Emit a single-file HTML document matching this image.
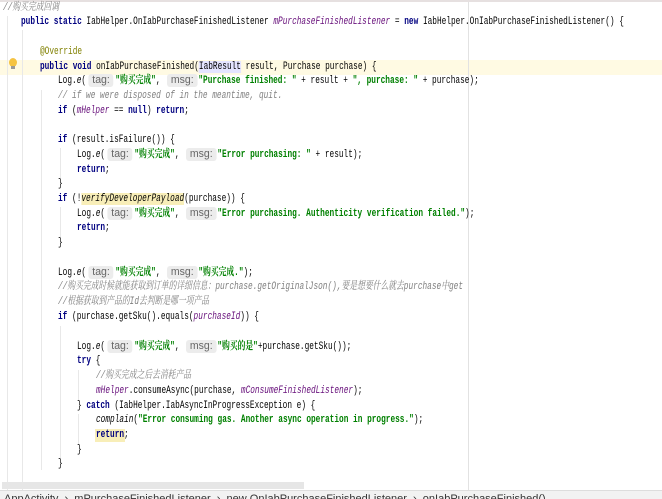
<!DOCTYPE html>
<html><head><meta charset="utf-8"><style>
html,body{margin:0;padding:0;width:662px;height:499px;overflow:hidden;background:#fff;position:relative}
.ln{position:absolute;left:0;height:15px;line-height:15px;white-space:pre;font-family:"Liberation Mono","Noto Serif CJK SC",monospace;font-size:11px;color:#000;transform:scaleX(0.708);transform-origin:0 0}
.k{color:#000080;font-weight:bold}
.s{color:#008000;font-weight:bold}
.c{color:#808080;font-style:italic}
.f{color:#660e7a;font-style:italic}
.a{color:#808000}
.i{font-style:italic}
.h{display:inline-block;background:#ececec;color:#666;font-family:"Liberation Sans",sans-serif;font-size:11px;line-height:13px;padding:0 4px;border-radius:3px;margin:0 3px;transform:scaleX(1.35);transform-origin:0 50%;margin-right:12px}
.g{position:absolute;width:1px;background:#e8e8e8}
</style></head><body>
<div style="position:absolute;left:0;top:0;width:662px;height:2px;background:#e6e0e0"></div>
<div style="position:absolute;left:0;top:60px;width:662px;height:15px;background:#fffae3"></div>
<div style="position:absolute;left:468px;top:2px;width:1px;height:488px;background:#e2e2e2"></div>
<div class="g" style="left:7px;top:16px;height:474px"></div>
<div class="g" style="left:22px;top:30px;height:460px"></div>
<div class="g" style="left:41px;top:90px;height:380px"></div>
<div class="g" style="left:60px;top:148px;height:30px"></div>
<div class="g" style="left:60px;top:207px;height:30px"></div>
<div class="g" style="left:60px;top:326px;height:132px"></div>
<div class="g" style="left:78px;top:370px;height:30px"></div>
<div class="g" style="left:78px;top:414px;height:30px"></div>
<div style="position:absolute;left:9px;top:58px;width:8px;height:9px;border-radius:50%;background:#f5c342"></div>
<div style="position:absolute;left:11px;top:66px;width:4px;height:3px;background:#999"></div>
<div style="position:absolute;left:95px;top:429px;width:30px;height:13px;background:#f8eeb8"></div>
<div style="position:absolute;left:2px;top:482px;width:302px;height:7px;background:#e6e6e6"></div>
<div style="position:absolute;left:0;top:490px;width:662px;height:9px;background:#f2f2f2;border-top:1px solid #ddd;overflow:hidden">
<div style="position:absolute;left:4px;top:2px;font-family:'Liberation Sans',sans-serif;font-size:11px;color:#333;white-space:pre">AppActivity  ›  mPurchaseFinishedListener  ›  new OnIabPurchaseFinishedListener  ›  onIabPurchaseFinished()</div></div>

<div class="ln" style="top:1px;left:3px"><span class="c">//购买完成回调</span></div>
<div class="ln" style="top:15px;left:21px"><span class="k">public static </span>IabHelper.OnIabPurchaseFinishedListener <span class="f">mPurchaseFinishedListener</span> = <span class="k">new </span>IabHelper.OnIabPurchaseFinishedListener() {</div>
<div class="ln" style="top:45px;left:40px"><span class="a">@Override</span></div>
<div class="ln" style="top:60px;left:40px"><span class="k">public void </span>onIabPurchaseFinished(<span style="background:#e4e4ff">IabResult</span> result, Purchase purchase) {</div>
<div class="ln" style="top:74px;left:58px">Log.<span class="i">e</span>(<span class="h">tag:</span><span class="s">"购买完成"</span>, <span class="h">msg:</span><span class="s">"Purchase finished: "</span> + result + <span class="s">", purchase: "</span> + purchase);</div>
<div class="ln" style="top:89px;left:58px"><span class="c">// if we were disposed of in the meantime, quit.</span></div>
<div class="ln" style="top:104px;left:58px"><span class="k">if </span>(<span class="f">mHelper</span> == <span class="k">null</span>) <span class="k">return</span>;</div>
<div class="ln" style="top:133px;left:58px"><span class="k">if </span>(result.isFailure()) {</div>
<div class="ln" style="top:148px;left:77px">Log.<span class="i">e</span>(<span class="h">tag:</span><span class="s">"购买完成"</span>, <span class="h">msg:</span><span class="s">"Error purchasing: "</span> + result);</div>
<div class="ln" style="top:163px;left:77px"><span class="k">return</span>;</div>
<div class="ln" style="top:177px;left:58px">}</div>
<div class="ln" style="top:192px;left:58px"><span class="k">if </span>(!<span class="i" style="background:#f8eeb8">verifyDeveloperPayload</span>(purchase)) {</div>
<div class="ln" style="top:207px;left:77px">Log.<span class="i">e</span>(<span class="h">tag:</span><span class="s">"购买完成"</span>, <span class="h">msg:</span><span class="s">"Error purchasing. Authenticity verification failed."</span>);</div>
<div class="ln" style="top:221px;left:77px"><span class="k">return</span>;</div>
<div class="ln" style="top:236px;left:58px">}</div>
<div class="ln" style="top:266px;left:58px">Log.<span class="i">e</span>(<span class="h">tag:</span><span class="s">"购买完成"</span>, <span class="h">msg:</span><span class="s">"购买完成."</span>);</div>
<div class="ln" style="top:280px;left:58px"><span class="c">//购买完成时候就能获取到订单的详细信息：purchase.getOriginalJson(),要是想要什么就去purchase中get</span></div>
<div class="ln" style="top:295px;left:58px"><span class="c">//根据获取到产品的Id去判断是哪一项产品</span></div>
<div class="ln" style="top:310px;left:58px"><span class="k">if </span>(purchase.getSku().equals(<span class="f">purchaseId</span>)) {</div>
<div class="ln" style="top:340px;left:77px">Log.<span class="i">e</span>(<span class="h">tag:</span><span class="s">"购买完成"</span>, <span class="h">msg:</span><span class="s">"购买的是"</span>+purchase.getSku());</div>
<div class="ln" style="top:354px;left:77px"><span class="k">try </span>{</div>
<div class="ln" style="top:369px;left:96px"><span class="c">//购买完成之后去消耗产品</span></div>
<div class="ln" style="top:384px;left:96px"><span class="f">mHelper</span>.consumeAsync(purchase, <span class="f">mConsumeFinishedListener</span>);</div>
<div class="ln" style="top:399px;left:77px">} <span class="k">catch </span>(IabHelper.IabAsyncInProgressException e) {</div>
<div class="ln" style="top:413px;left:96px"><span class="i">complain</span>(<span class="s">"Error consuming gas. Another async operation in progress."</span>);</div>
<div class="ln" style="top:428px;left:96px"><span class="k">return</span>;</div>
<div class="ln" style="top:443px;left:77px">}</div>
<div class="ln" style="top:457px;left:58px">}</div>
</body></html>
